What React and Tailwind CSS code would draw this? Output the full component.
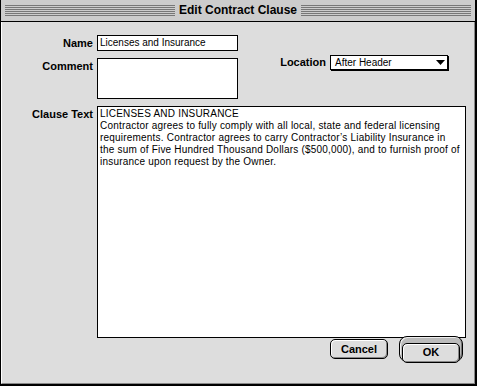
import React from 'react';

const stripes =
  'flex-1 h-[11px] bg-[repeating-linear-gradient(to_bottom,#777777_0px,#777777_1px,transparent_1px,transparent_2px)]';

const clauseLines = [
  'LICENSES AND INSURANCE',
  'Contractor agrees to fully comply with all local, state and federal licensing',
  'requirements. Contractor agrees to carry Contractor\u2019s Liability Insurance in',
  'the sum of Five Hundred Thousand Dollars ($500,000), and to furnish proof of',
  'insurance upon request by the Owner.',
];

export default function App() {
  return (
    <div className="w-[477px] h-[386px] flex flex-col bg-[#dddddd] border-l border-r-2 border-b-2 border-black text-black font-['Liberation_Sans',Arial,sans-serif]">
      {/* title bar */}
      <div className="h-[22px] flex items-center bg-[#cccccc] border-b border-black px-[4px] pb-[1px]">
        <div className={stripes} />
        <span className="px-[4px] text-[12px] font-bold leading-none">Edit Contract Clause</span>
        <div className={stripes} />
      </div>

      {/* body */}
      <div className="flex-1 flex flex-col border-l border-l-white border-r border-r-[#888888] border-b border-b-[#888888] pr-[8px] pt-[13px]">
        <div className="flex items-center">
          <div className="w-[91px] shrink-0 text-right text-[11px] font-bold leading-[13px]">Name</div>
          <div className="ml-[4px] w-[141px] h-[16px] border border-black bg-white pl-[2px] text-[10px] leading-[14px]">
            Licenses and Insurance
          </div>
        </div>

        <div className="flex items-start mt-[7px]">
          <div className="w-[91px] shrink-0 text-right text-[11px] font-bold leading-[13px] pt-[2px]">Comment</div>
          <div className="ml-[4px] w-[141px] h-[41px] border border-black bg-white" />
          <div className="ml-auto mr-[18px] -mt-[3px] flex items-center">
            <span className="text-[11px] font-bold leading-[13px]">Location</span>
            <div className="ml-[4px] w-[118px] h-[15px] border border-black bg-white shadow-[1px_1px_0_#000] flex items-center justify-between pl-[4px] pr-[2px] text-[10px] leading-none">
              <span>After Header</span>
              <svg width="9" height="5" viewBox="0 0 9 5">
                <polygon points="0,0 9,0 4.5,5" fill="#000" />
              </svg>
            </div>
          </div>
        </div>

        <div className="flex items-start mt-[7px]">
          <div className="w-[91px] shrink-0 text-right text-[11px] font-bold leading-[13px] pt-[2px]">Clause Text</div>
          <div className="ml-[4px] flex-1 min-w-0 overflow-hidden h-[232px] border border-black bg-white pl-[2px] pt-[1px] text-[10px] leading-[12px] tracking-[0.2px]">
            {clauseLines.map((line, i) => (
              <div key={i} className="whitespace-nowrap">{line}</div>
            ))}
          </div>
        </div>

        <div className="flex items-center justify-end -mt-[2px] mr-[3px]">
          <button className="w-[58px] h-[20px] rounded-[5px] border border-black bg-[#dddddd] shadow-[inset_-1px_-1px_0_#888888,inset_1px_1px_0_#ffffff] text-[11px] font-bold leading-none">
            Cancel
          </button>
          <div className="ml-[11px] w-[64px] h-[26px] rounded-[8px] border border-black bg-[#bbbbbb] shadow-[inset_-1px_-1px_0_#777777,inset_1px_1px_0_#eeeeee] p-[2px]">
            <button className="w-full h-full rounded-[5px] border border-black bg-[#dddddd] shadow-[inset_-1px_-1px_0_#888888,inset_1px_1px_0_#ffffff] text-[11px] font-bold leading-none">
              OK
            </button>
          </div>
        </div>
      </div>
    </div>
  );
}
